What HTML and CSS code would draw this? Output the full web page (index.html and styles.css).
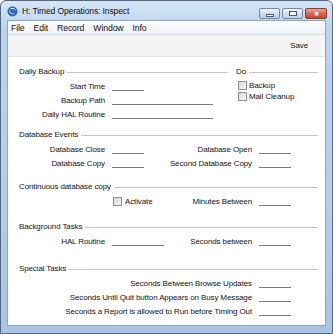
FILE: index.html
```html
<!DOCTYPE html>
<html lang="en">
<head>
  <meta charset="UTF-8">
  <title>H: Timed Operations: Inspect</title>
  <link rel="stylesheet" href="styles.css">
</head>
<body>
  <div class="window">
    <div class="titlebar">
      <svg class="app-icon" width="11" height="11" viewBox="0 0 11 11">
        <circle cx="5.5" cy="5.5" r="5" fill="#2a68bb"/>
        <path d="M2.2 3.6 Q3 8.6 8.8 7.4 Q5.2 9.4 2.6 6.6 Q1.6 5 2.2 3.6Z" fill="#fff"/>
        <path d="M3.6 2.6 Q6.5 1.6 8.4 4" stroke="#fff" stroke-width="1" fill="none"/>
      </svg>
      <span class="title">H: Timed Operations: Inspect</span>
      <div class="caption-buttons">
        <div class="cap-btn"><span class="min-glyph"></span></div>
        <div class="cap-btn"><span class="max-glyph"></span></div>
        <div class="cap-btn close">&#x2716;</div>
      </div>
    </div>

    <div class="client">
      <div class="menubar">
        <span>File</span>
        <span>Edit</span>
        <span>Record</span>
        <span>Window</span>
        <span>Info</span>
      </div>
      <div class="toolbar">
        <span class="save">Save</span>
      </div>

      <div class="content">
        <!-- Daily Backup -->
        <div class="backup-block">
          <div class="backup-left">
            <div class="section-head"><span>Daily Backup</span><span class="rule"></span></div>
            <div class="row">
              <span class="label col1">Start Time</span><span class="field short"></span>
            </div>
            <div class="row">
              <span class="label col1">Backup Path</span><span class="field long"></span>
            </div>
            <div class="row">
              <span class="label col1">Daily HAL Routine</span><span class="field long"></span>
            </div>
          </div>
          <div class="backup-right">
            <div class="section-head"><span>Do</span><span class="rule"></span></div>
            <div class="checks">
              <label class="check"><span class="box"></span>Backup</label>
              <label class="check"><span class="box"></span>Mail Cleanup</label>
            </div>
          </div>
        </div>

        <div class="section events">
          <div class="section-head"><span>Database Events</span><span class="rule"></span></div>
          <div class="row">
            <span class="label col1">Database Close</span><span class="field short"></span>
            <span class="label col2">Database Open</span><span class="field short"></span>
          </div>
          <div class="row">
            <span class="label col1">Database Copy</span><span class="field short"></span>
            <span class="label col2">Second Database Copy</span><span class="field short"></span>
          </div>
        </div>

        <div class="section continuous">
          <div class="section-head"><span>Continuous database copy</span><span class="rule"></span></div>
          <div class="row">
            <span class="col1"></span>
            <label class="check inline"><span class="box"></span>Activate</label>
            <span class="label after-check">Minutes Between</span><span class="field short"></span>
          </div>
        </div>

        <div class="section background">
          <div class="section-head"><span>Background Tasks</span><span class="rule"></span></div>
          <div class="row">
            <span class="label col1">HAL Routine</span><span class="field mid"></span>
            <span class="label after-mid">Seconds between</span><span class="field short"></span>
          </div>
        </div>

        <div class="section special">
          <div class="section-head"><span>Special Tasks</span><span class="rule"></span></div>
          <div class="row">
            <span class="label wide">Seconds Between Browse Updates</span><span class="field short"></span>
          </div>
          <div class="row">
            <span class="label wide">Seconds Until Quit button Appears on Busy Message</span><span class="field short"></span>
          </div>
          <div class="row">
            <span class="label wide">Seconds a Report is allowed to Run before Timing Out</span><span class="field short"></span>
          </div>
        </div>
      </div>
    </div>
  </div>
</body>
</html>
```

FILE: styles.css
```css
body {
  margin: 0;
  padding: 0;
  font-family: "Liberation Sans", Arial, sans-serif;
  font-size: 8px;
  letter-spacing: -0.12px;
  color: #141414;
  background: #fff;
}

.window {
  width: 333px;
  height: 334px;
  box-sizing: border-box;
  border: 1px solid #55687f;
  border-radius: 6px 6px 0 0;
  background: linear-gradient(180deg, #d6e6f6 0%, #bcd4ee 8%, #b4cde9 60%, #a9c4e3 100%);
  display: flex;
  flex-direction: column;
  padding: 0 6px 7px 6px;
}

.titlebar {
  height: 19px;
  display: flex;
  align-items: center;
  flex-shrink: 0;
}

.app-icon {
  margin-right: 4px;
  margin-top: 1px;
}

.title {
  font-size: 8.5px;
  letter-spacing: -0.1px;
  color: #111;
  margin-top: 1px;
}

.caption-buttons {
  margin-left: auto;
  display: flex;
  gap: 2px;
  align-self: flex-start;
  margin-top: 7px;
  margin-right: -1px;
}

.cap-btn {
  width: 21px;
  height: 11px;
  box-sizing: border-box;
  border: 1px solid #7489a3;
  border-radius: 2px;
  background: linear-gradient(180deg, #edf3fa 0%, #d3dfed 50%, #bfcfe3 100%);
  display: flex;
  align-items: center;
  justify-content: center;
}

.cap-btn.close {
  width: 22px;
  border-color: #8a3a2e;
  background: linear-gradient(180deg, #eaa698 0%, #d76a55 50%, #c4432d 100%);
  color: #fff;
  font-size: 6px;
  line-height: 1;
}

.min-glyph {
  width: 6px;
  height: 1px;
  margin-top: 3px;
  background: #fff;
  border: 1px solid #4a5a70;
}

.max-glyph {
  width: 6px;
  height: 3px;
  border: 1px solid #4a5a70;
  background: #fff;
}

.client {
  flex: 1;
  display: flex;
  flex-direction: column;
  background: #fff;
  border: 1px solid #8ea4bf;
}

.menubar {
  height: 13px;
  display: flex;
  align-items: center;
  gap: 9px;
  padding-left: 3px;
  background: linear-gradient(180deg, #fbfcfe 0%, #edf2f9 100%);
  border-bottom: 1px solid #d3deea;
  font-size: 8.7px;
  color: #111;
}

.toolbar {
  height: 21px;
  display: flex;
  align-items: center;
  justify-content: flex-end;
  padding-right: 17px;
  background: #f4f4f4;
  border-bottom: 1px solid #e4e4e4;
}

.content {
  padding: 8px 7px 0 11px;
}

.section-head {
  display: flex;
  align-items: center;
  height: 12px;
}

.section-head .rule {
  flex: 1;
  border-bottom: 1px solid #c6c6c6;
  margin-left: 3px;
  margin-top: 2px;
}

.backup-block {
  display: flex;
}

.backup-left {
  width: 209px;
}

.backup-right {
  flex: 1;
  margin-left: 8px;
}

.row {
  display: flex;
  align-items: center;
  height: 14px;
}

.section-head + .row {
  margin-top: 2px;
}

.label {
  text-align: right;
  white-space: nowrap;
  flex-shrink: 0;
}

.col1 {
  width: 86px;
  margin-right: 7px;
  flex-shrink: 0;
}

.col2 {
  width: 108px;
  margin-right: 7px;
}

.after-check {
  width: 88px;
  margin-right: 7px;
}

.after-mid {
  width: 88px;
  margin-right: 7px;
}

.wide {
  width: 233px;
  margin-right: 7px;
}

.field {
  height: 0;
  border-bottom: 1px solid #7a7a7a;
  margin-top: 8px;
  flex-shrink: 0;
}

.field.short {
  width: 32px;
}

.field.mid {
  width: 52px;
}

.field.long {
  width: 101px;
}

.checks {
  margin-top: 3px;
}

.check {
  display: flex;
  align-items: center;
  height: 11px;
}

.check .box {
  width: 7px;
  height: 7px;
  flex-shrink: 0;
  border: 1px solid #8e8f8f;
  background: linear-gradient(135deg, #d8d8d8, #f6f6f6);
  margin-right: 2px;
  margin-left: 2px;
}

.check.inline {
  width: 52px;
  height: 14px;
  flex-shrink: 0;
}

.check.inline .box {
  margin-left: 1px;
  margin-right: 3px;
}

.events {
  margin-top: 7px;
}

.continuous {
  margin-top: 10px;
}

.background {
  margin-top: 12px;
}

.special {
  margin-top: 14px;
}
```
